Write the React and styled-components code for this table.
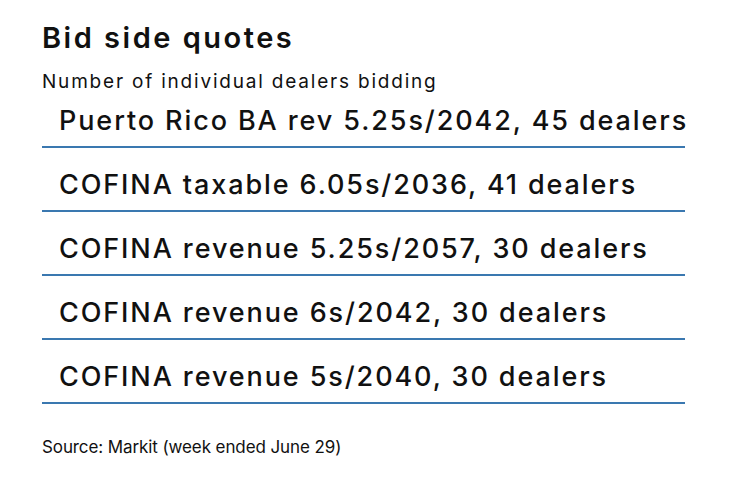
import React from 'react';
import styled, { createGlobalStyle } from 'styled-components';

const GlobalStyle = createGlobalStyle`
  body {
    margin: 0;
    background: #fff;
    font-family: Inter, "Noto Sans", sans-serif;
    color: #111;
  }
`

const Chart = styled.div`
  width: 740px;
  height: 482px;
  padding: 20px 0 0 42px;
  box-sizing: border-box;
`

const Title = styled.h1`
  margin: 0;
  font-size: 29px;
  font-weight: 600;
  letter-spacing: 2.5px;
  line-height: 36px;
`

const Subtitle = styled.div`
  font-size: 19px;
  letter-spacing: 1.8px;
  line-height: 24px;
  margin-top: 14px;
`

const List = styled.div`
  display: flex;
  flex-direction: column;
  gap: 10px;
  width: 643px;
`

const Row = styled.div`
  font-size: 27px;
  font-weight: 500;
  letter-spacing: 1.9px;
  line-height: 30px;
  padding: 12px 0 10px 17px;
  border-bottom: 2px solid #3a78b0;
  white-space: nowrap;
`

const Source = styled.div`
  font-size: 17px;
  letter-spacing: -0.1px;
  line-height: 20px;
  margin-top: 33px;
`

const quotes = [
  'Puerto Rico BA rev 5.25s/2042, 45 dealers',
  'COFINA taxable 6.05s/2036, 41 dealers',
  'COFINA revenue 5.25s/2057, 30 dealers',
  'COFINA revenue 6s/2042, 30 dealers',
  'COFINA revenue 5s/2040, 30 dealers',
]

const App = () => {
  return (
    <Chart>
      <GlobalStyle />
      <Title>Bid side quotes</Title>
      <Subtitle>Number of individual dealers bidding</Subtitle>
      <List>
        {quotes.map(q => (
          <Row key={q}>{q}</Row>
        ))}
      </List>
      <Source>Source: Markit (week ended June 29)</Source>
    </Chart>
  )
};

export default App;
